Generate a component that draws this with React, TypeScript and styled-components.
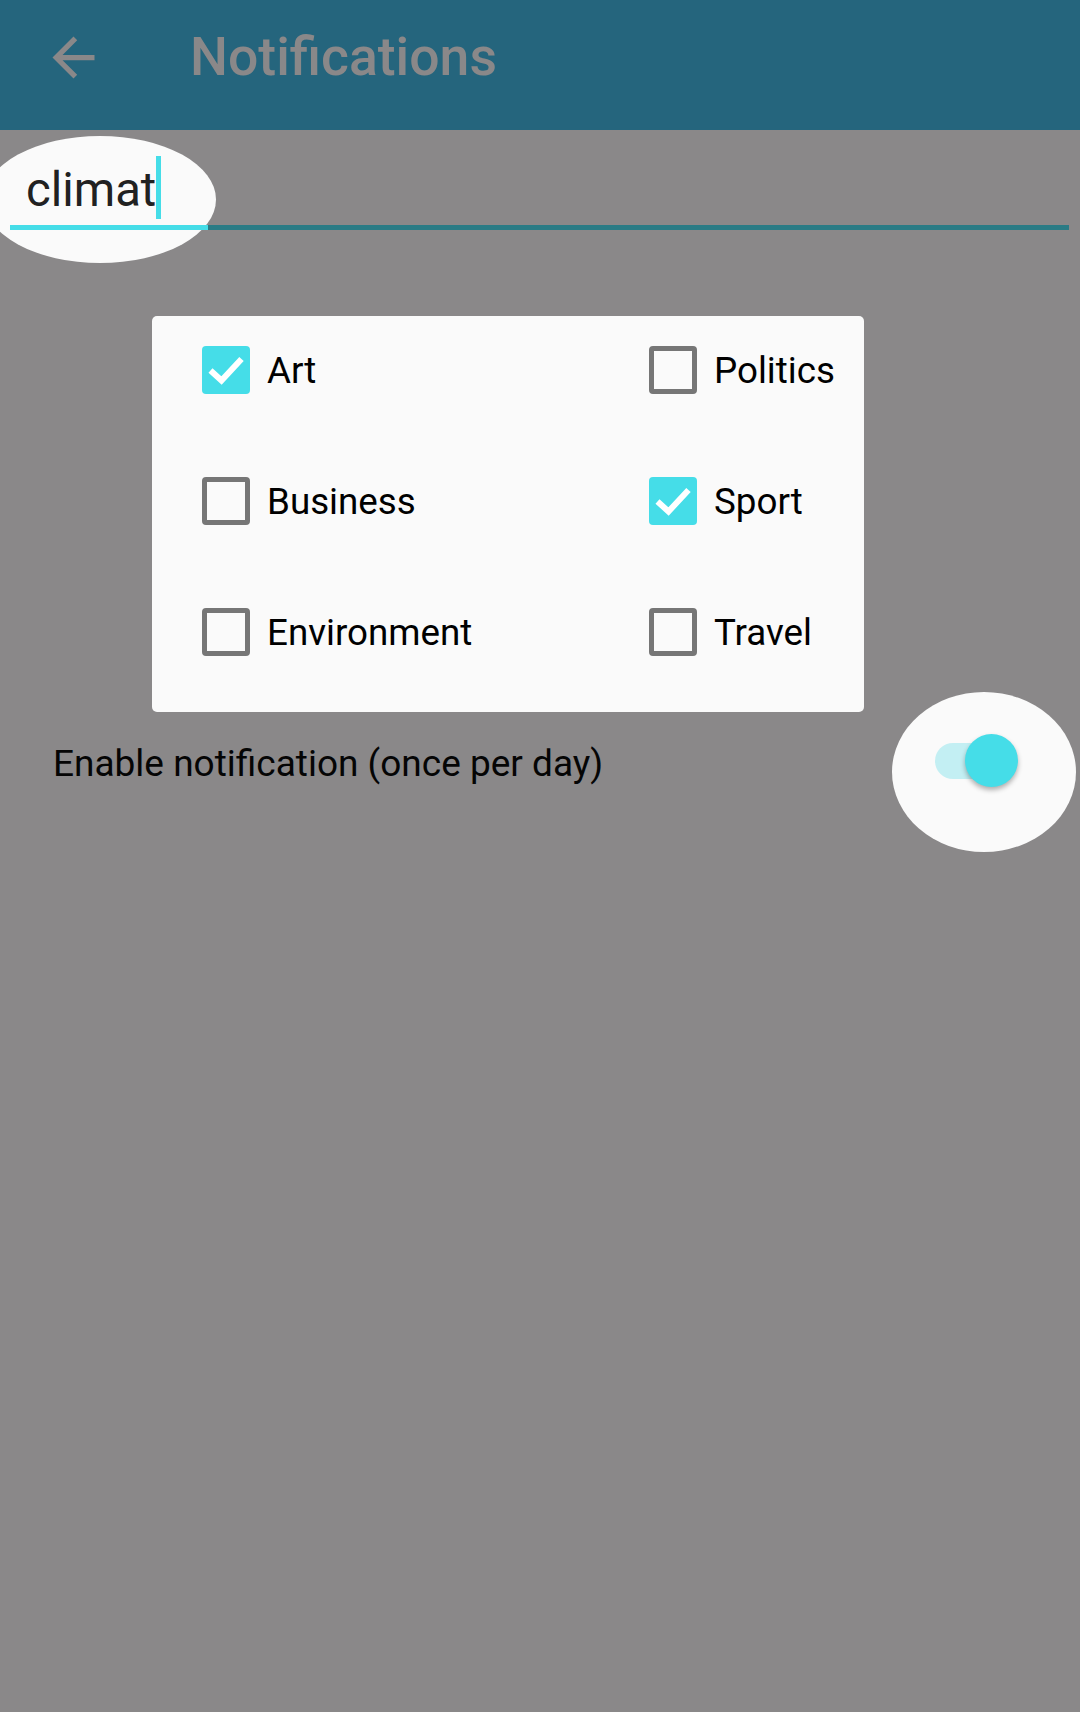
import React from "react";
import styled, { createGlobalStyle } from "styled-components";

const Global = createGlobalStyle`
  html, body {
    margin: 0;
    padding: 0;
    background: #8a8889;
  }
  body {
    font-family: Roboto, "Noto Sans", "Liberation Sans", sans-serif;
    overflow-x: hidden;
  }
`;

const Page = styled.div`
  position: relative;
  width: 1080px;
  min-height: 1712px;
  background: #8a8889;
  overflow: hidden;
`;

const Header = styled.header`
  height: 130px;
  box-sizing: border-box;
  padding: 0 0 16px 42px;
  background: #25657d;
  display: flex;
  align-items: center;
`;

const BackButton = styled.span`
  display: flex;
  width: 63px;
  height: 63px;
  color: #8a8889;
`;

const Title = styled.h1`
  margin: 0 0 0 85px;
  font-family: Roboto, "Noto Sans", sans-serif;
  font-weight: 500;
  font-size: 53.5px;
  line-height: 1;
  color: #8a8889;
`;

const SearchSection = styled.section`
  position: relative;
  padding: 26px 11px 0 10px;
`;

const Spotlight = styled.div<{ $w: number; $h: number; $l: number; $t: number }>`
  position: absolute;
  left: ${(p) => p.$l}px;
  top: ${(p) => p.$t}px;
  width: ${(p) => p.$w}px;
  height: ${(p) => p.$h}px;
  border-radius: 50%;
  background: #fafafa;
  z-index: 0;
`;

const InputRow = styled.div`
  position: relative;
  z-index: 1;
  display: flex;
  align-items: flex-start;
  padding-left: 16px;
  height: 63px;
`;

const InputText = styled.span`
  margin-top: 6px;
  font-size: 47.25px;
  line-height: 56px;
  color: #212121;
`;

const Caret = styled.span`
  display: block;
  width: 5px;
  height: 63px;
  background: #45dde8;
`;

const Underline = styled.div<{ $split: number }>`
  position: relative;
  z-index: 1;
  margin-top: 6px;
  height: 5px;
  background: linear-gradient(
    to right,
    #45dde8 0,
    #45dde8 ${(p) => p.$split}px,
    #2a7b85 ${(p) => p.$split}px,
    #2a7b85 100%
  );
`;

const Card = styled.div`
  margin: 86px 0 0 152px;
  width: 712px;
  box-sizing: border-box;
  padding: 30px 0 56px 50px;
  background: #fafafa;
  border-radius: 5px;
  display: grid;
  grid-template-columns: 447px 1fr;
  grid-auto-rows: 48px;
  row-gap: 83px;
`;

const Option = styled.label`
  display: flex;
  align-items: center;
  gap: 17px;
  font-size: 36.75px;
  color: #000;
`;

const Box = styled.span<{ $checked: boolean }>`
  display: flex;
  flex: none;
  width: 48px;
  height: 48px;
  box-sizing: border-box;
  border-radius: 4px;
  background: ${(p) => (p.$checked ? "#45dde8" : "transparent")};
  border: ${(p) => (p.$checked ? "none" : "5px solid #767676")};
`;

const EnableRow = styled.div`
  position: relative;
  height: 100px;
  display: flex;
  align-items: center;
  justify-content: space-between;
  padding: 0 62px 0 53px;
`;

const EnableText = styled.span`
  position: relative;
  z-index: 1;
  margin-top: 2px;
  font-size: 37px;
  color: #050505;
`;

const Switch = styled.span`
  position: relative;
  z-index: 1;
  display: block;
  width: 83px;
  height: 53px;
  margin-top: -4px;
`;

const Track = styled.span`
  display: block;
  width: 80px;
  height: 36px;
  margin-top: 9px;
  border-radius: 18px;
  background: #c3eff3;
`;

const Thumb = styled.span`
  position: absolute;
  right: 0;
  top: 0;
  width: 53px;
  height: 53px;
  border-radius: 50%;
  background: #45dde8;
  box-shadow: 0 3px 5px rgba(0, 0, 0, 0.3);
`;

const options = [
  { label: "Art", checked: true },
  { label: "Politics", checked: false },
  { label: "Business", checked: false },
  { label: "Sport", checked: true },
  { label: "Environment", checked: false },
  { label: "Travel", checked: false },
];

const Check = () => (
  <svg width="48" height="48" viewBox="0 0 48 48" fill="none">
    <path d="M8.5 24.5 L19.5 34.5 L39.5 13" stroke="#fff" strokeWidth="6" />
  </svg>
);

export default function App() {
  return (
    <Page>
      <Global />
      <Header>
        <BackButton>
          <svg width="63" height="63" viewBox="0 0 24 24" fill="currentColor">
            <path d="M20 11H7.83l5.59-5.59L12 4l-8 8 8 8 1.41-1.41L7.83 13H20v-2z" />
          </svg>
        </BackButton>
        <Title>Notifications</Title>
      </Header>

      <SearchSection>
        <Spotlight $l={-16} $t={6} $w={232} $h={127} />
        <InputRow>
          <InputText>climat</InputText>
          <Caret />
        </InputRow>
        <Underline $split={198} />
      </SearchSection>

      <Card>
        {options.map((o) => (
          <Option key={o.label}>
            <Box $checked={o.checked}>{o.checked && <Check />}</Box>
            {o.label}
          </Option>
        ))}
      </Card>

      <EnableRow>
        <Spotlight $l={892} $t={-20} $w={184} $h={160} />
        <EnableText>Enable notification (once per day)</EnableText>
        <Switch>
          <Track />
          <Thumb />
        </Switch>
      </EnableRow>
    </Page>
  );
}
